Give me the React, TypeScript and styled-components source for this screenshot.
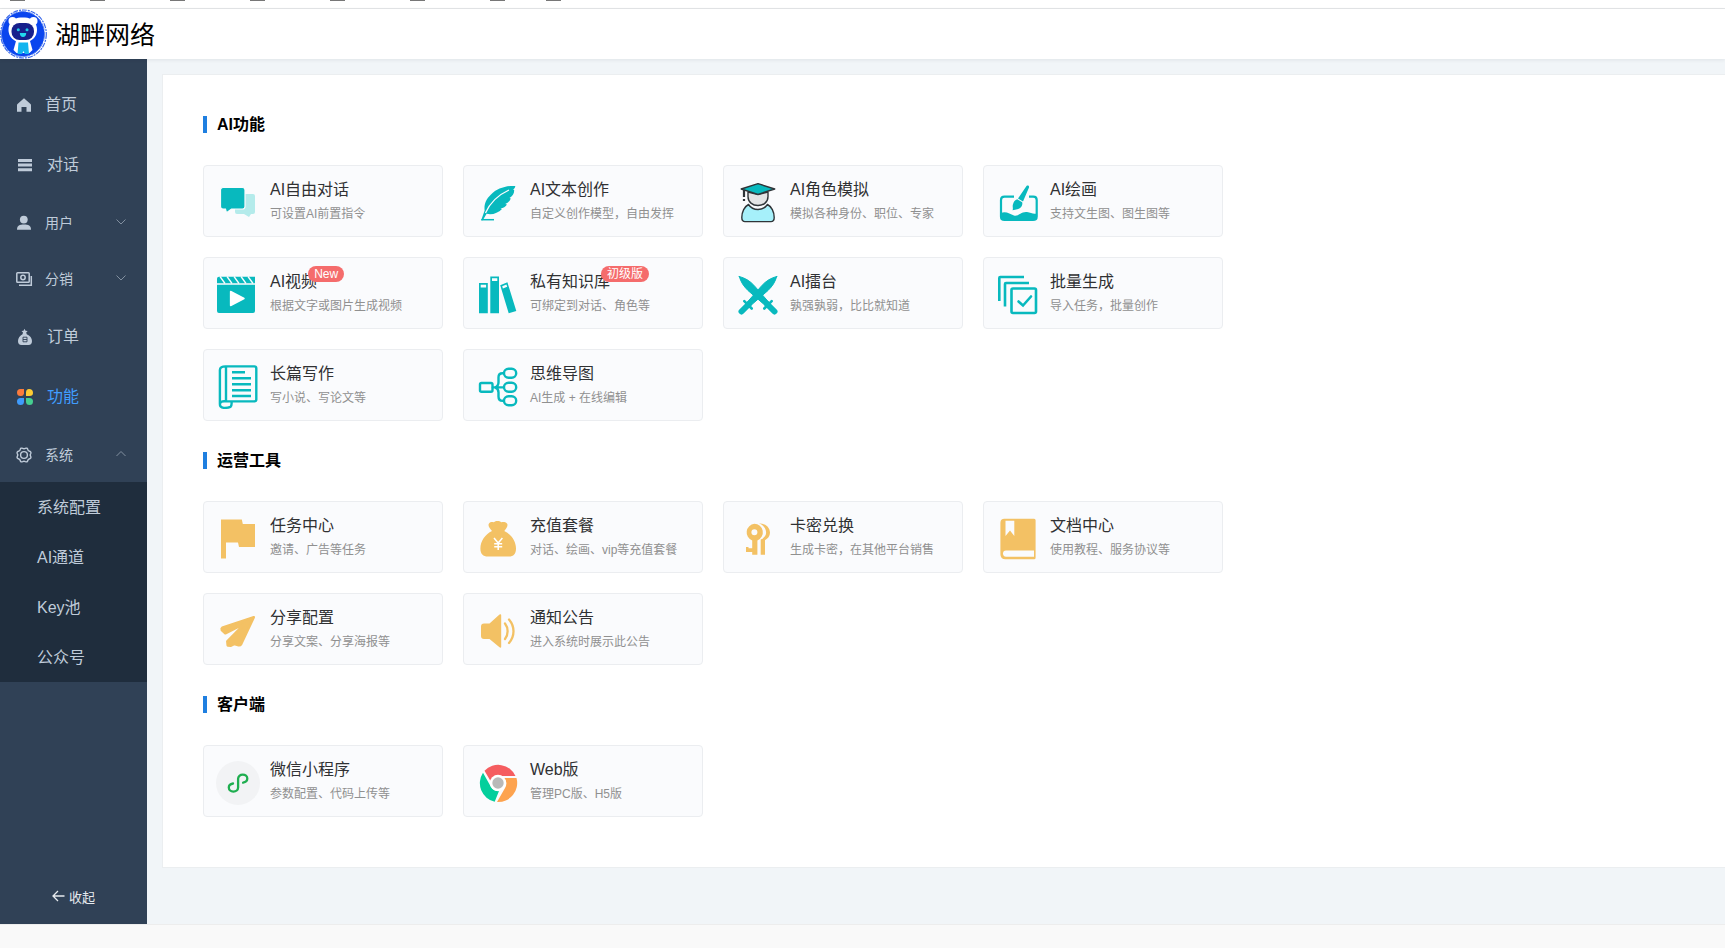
import React from "react";
import styled, { createGlobalStyle } from "styled-components";

const TEAL = "#08b9be";
const GOLD = "#f3c164";
const CARD_BG = "#fafbfd";

const GlobalStyle = createGlobalStyle`
  *, *::before, *::after { box-sizing: border-box; }
  html, body, #root { height: 100%; }
  body {
    margin: 0;
    background: #fff;
    color: #303133;
    font-family: "Liberation Sans", "Noto Sans CJK SC", sans-serif;
    font-size: 16px;
  }
  h1, h2, p, ul { margin: 0; padding: 0; }
  ul { list-style: none; }
  button { font-family: inherit; }
`;

const Page = styled.div`
  display: flex;
  flex-direction: column;
  min-height: 100%;
  overflow-x: hidden;
`;

const BookmarkStrip = styled.div`
  display: flex;
  flex: none;
  gap: 65px;
  height: 9px;
  padding-left: 10px;
  border-bottom: 1px solid #e4e6e8;
`;

const BookmarkEdge = styled.span<{ $tight?: boolean }>`
  width: 15px;
  height: 1px;
  margin-left: ${(p) => (p.$tight ? "-24px" : "0")};
  background: #777;
`;

const Header = styled.header`
  display: flex;
  flex: none;
  align-items: center;
  gap: 8px;
  height: 50px;
  background: #fff;
  box-shadow: 0 1px 4px rgba(0, 21, 41, 0.08);
  z-index: 1;
`;

const Brand = styled.h1`
  padding-top: 2px;
  font-size: 25px;
  line-height: 32px;
  font-weight: 400;
  color: #000;
`;

const Body = styled.div`
  display: flex;
  flex: 1;
`;

const Sidebar = styled.nav`
  display: flex;
  flex: none;
  flex-direction: column;
  width: 147px;
  padding-top: 15px;
  background: #304156;
`;

const MenuButton = styled.button<{ $group?: boolean; $active?: boolean }>`
  display: flex;
  align-items: center;
  gap: ${(p) => (p.$group ? "12px" : "13px")};
  width: 100%;
  height: ${(p) => (p.$group ? "56px" : "60px")};
  padding: ${(p) => (p.$group ? "0 20px 0 16px" : "0 20px 3px 16px")};
  border: 0;
  background: none;
  color: ${(p) => (p.$active ? "#409eff" : "#bfcbd9")};
  font-size: ${(p) => (p.$group ? "14px" : "16px")};
  text-align: left;
  cursor: pointer;

  svg {
    flex: none;
    margin-top: ${(p) => (p.$group ? "1px" : "4px")};
  }
`;

const Arrow = styled.svg`
  margin-left: auto;
  color: #8290a0;
`;

const SubMenu = styled.ul`
  background: #1f2d3d;
`;

const SubButton = styled.button`
  display: block;
  width: 100%;
  height: 50px;
  padding: 0 0 2px 37px;
  border: 0;
  background: none;
  color: #bfcbd9;
  font-size: 16px;
  text-align: left;
  cursor: pointer;
`;

const CollapseButton = styled.button`
  display: flex;
  align-items: center;
  justify-content: center;
  gap: 4px;
  height: 56px;
  margin-top: auto;
  padding: 0;
  border: 0;
  background: none;
  color: #e6eaee;
  font-size: 13px;
  cursor: pointer;
`;

const Content = styled.main`
  flex: 1;
  min-width: 0;
  padding: 15px 0 0 15px;
  background: #f1f5f8;
`;

const Panel = styled.div`
  display: flex;
  flex-direction: column;
  gap: 31px;
  padding: 41px 40px 50px;
  border: 1px solid #ebeef0;
  border-right: 0;
  background: #fff;
`;

const SectionTitle = styled.h2`
  margin-bottom: 32px;
  padding-left: 10px;
  border-left: 4px solid #1f7fe0;
  color: #000;
  font-size: 16px;
  line-height: 17px;
  font-weight: 700;
`;

const CardGrid = styled.div`
  display: grid;
  grid-template-columns: repeat(auto-fill, 240px);
  gap: 20px;
  max-width: 1020px;
`;

const Card = styled.a`
  display: flex;
  align-items: center;
  gap: 10px;
  height: 72px;
  padding: 0 12px;
  border: 1px solid #ebedf0;
  border-radius: 4px;
  background: ${CARD_BG};
  color: inherit;
  text-decoration: none;
`;

const CardIcon = styled.svg`
  flex: none;
  width: 44px;
  height: 44px;
  margin-top: 4px;
`;

const CardText = styled.div`
  display: flex;
  flex-direction: column;
  align-items: flex-start;
  padding-top: 2px;
`;

const CardTitle = styled.span`
  position: relative;
  color: #303133;
  font-size: 16px;
  line-height: 24px;
  white-space: nowrap;
`;

const CardNote = styled.span`
  color: #909090;
  font-size: 12px;
  line-height: 24px;
  white-space: nowrap;
`;

const Badge = styled.span`
  position: absolute;
  top: -4px;
  left: calc(100% - 9px);
  padding: 0 6px;
  border-radius: 8px;
  background: #f56c6c;
  color: #fff;
  font-size: 12px;
  line-height: 16px;
`;

const Footer = styled.footer`
  flex: none;
  height: 24px;
  border-top: 1px solid #ededed;
  background: #f9f9f9;
`;

/* ---------- card drawings, all on a 44 x 44 grid ---------- */

const icons: Record<string, React.ReactNode> = {
  chat: (
    <>
      <path fill="#b4ebeb" d="M21 13H37a2 2 0 0 1 2 2V31a2 2 0 0 1-2 2H35L33 36 28 33H21a2 2 0 0 1-2-2V15a2 2 0 0 1 2-2z" />
      <path fill={TEAL} stroke={CARD_BG} strokeWidth="1.2" d="M7 6.500H26.500a2.500 2.500 0 0 1 2.500 2.500V25.500a2.500 2.500 0 0 1-2.500 2.500H15.500L10.500 31.800 9.500 28H7a2.500 2.500 0 0 1-2.500-2.500V9A2.500 2.500 0 0 1 7 6.500z" />
    </>
  ),
  feather: (
    <>
      <path fill={TEAL} d="M39.300 5c-9-.6-18.300 2.400-24.300 8.400C9.500 18.500 8 24 8.600 29.500L5.200 39.300h1.600l3.800-6.500c5.500 1.500 11.400-.8 15.400-4.800l-1.500-.6c2.800-.2 5-1.700 6.500-4l-1.800-.3c2.500-1 4.600-3 5.600-5.600l-1.300-.5c3-1.800 4.800-4.800 4.700-7.800l-1-.6c1.200-1 2-2.300 2.100-3.600z" />
      <path fill="none" stroke={CARD_BG} strokeWidth="1.300" d="M9.500 32C13 24 21 14.500 33 9" />
      <path stroke={TEAL} strokeWidth="1.500" d="M5.300 38.700H18" />
    </>
  ),
  graduate: (
    <g stroke="#2f3438" strokeWidth="1.400" strokeLinejoin="round">
      <path fill="#a6f0fa" d="M12.500 23.500c2 3 5.500 5 9.500 5s7.500-2 9.500-5c4 2 6.700 7.500 6.700 13 0 2.700-1.200 4.100-3.200 4.100H9c-2 0-3.200-1.400-3.200-4.100 0-5.500 2.700-11 6.700-13z" />
      <path fill="#e3e4e5" d="M12 11v4.500c0 5.600 4.500 9 10 9s10-3.400 10-9V11L22 13.500z" />
      <path fill={TEAL} d="M5.200 8 22 2.600 38.700 8 22 13.300z" />
      <path fill="none" strokeWidth="2.200" d="M8 9v7M8 18v2" />
    </g>
  ),
  paint: (
    <>
      <path fill="none" stroke={TEAL} strokeWidth="2.200" d="M18 15.700H8.500Q5 15.700 5 19v16.500Q5 39 8.500 39h28.500q3.700 0 3.700-3.500V19q0-3.300-3.500-3.300H33" />
      <path fill={TEAL} d="M5 32c5-2 9 1.200 13 2.600 4 1.300 7-4.300 13-3.600 4 .5 6 2.600 9.700 1.500v3.500q0 3-3.700 3H9q-4 0-4-4z" />
      <path fill={TEAL} d="M30.500 5c1-1 3-.3 2.500 1.500L27 20.500 22 17.500zM21.200 18.200l5 3c.8 3.500-1.600 6.800-5 7-1.500 0-2.600 1-4.700 1 1-1.700-.4-3.500.5-6 .6-2.300 2-4.500 4.200-5z" />
    </>
  ),
  video: (
    <>
      <path fill={TEAL} d="M3 3.700h36v6.600H1V5.700q0-2 2-2zM1 11.800h38V38q0 2-2 2H3q-2 0-2-2z" />
      <path fill="#fff" stroke="#fff" strokeWidth="1.500" strokeLinejoin="round" d="M14.600 18.500v14L28 25.500z" />
      <path stroke={CARD_BG} strokeWidth="1.300" d="m4 3.500 5 7M11 3.500l5 7M18 3.500l5 7M25 3.500l5 7M32 3.500l5 7" />
    </>
  ),
  books: (
    <>
      <path fill={TEAL} d="M3 10h8.800v30.300H3zM14.300 3.400H23v36.900h-8.700zM24.200 12.300l7.200-3 8.900 28.700-7.600 2.300z" />
      <path fill={CARD_BG} d="M4.700 11.800h5.400v2.600H4.700zM16 5.200h5.300v2.700H16zM26.200 13.200l4.200-1.800.8 2.400-4.300 1.700z" />
    </>
  ),
  swords: (
    <g fill={TEAL} stroke={TEAL} strokeLinecap="round">
      <path strokeWidth="1" strokeLinejoin="round" d="M3.300 3.500c6 1.500 10.500 4.500 14.500 8.700L33.500 30l-3.300 3.300L12 17.500C7.500 13 4.800 9 3.300 3.500z" />
      <path strokeWidth="1" strokeLinejoin="round" d="M40.700 3.500c-6 1.500-10.500 4.500-14.500 8.700L10.500 30l3.300 3.300L32 17.500c4.500-4.500 7.200-8.500 8.700-14z" />
      <path strokeWidth="6" d="m31 31 7.500 7.500M13 31l-7.500 7.500" />
      <path strokeWidth="2.600" d="m28.300 35.500 7.400-7.400M15.700 35.500l-7.400-7.400" />
    </g>
  ),
  batch: (
    <g fill="none" stroke={TEAL} strokeWidth="2.600">
      <path d="M3.300 28V5q0-1 1-1H28M9 33.500V11q0-1 1-1H33" />
      <rect x="15.500" y="15.500" width="24.500" height="24.500" rx="1.500" />
      <path d="m22.500 28.500 4.500 4 8-9" strokeLinecap="round" />
    </g>
  ),
  scroll: (
    <g fill="none" stroke={TEAL} strokeWidth="2.400" strokeLinejoin="round">
      <path d="M10 1.400H38.300q2 0 2 2v31.200q0 1.800-2 1.800H10zM10 1.400Q3.900 1.200 3.900 5v34M10 36.400c-4-.8-6.100.8-6.100 3.100 0 4.300 6.600 3.800 10.600 2.300q1.500-1.300 1-5.400" />
      <path d="M16 7.200h13M16 13.200h19M16 19.200h19M16 25.200h19M16 31h19" />
    </g>
  ),
  mindmap: (
    <g fill="none" stroke={TEAL} strokeWidth="2.400">
      <rect x="4" y="18" width="12.500" height="8.800" rx="1.500" />
      <rect x="28" y="3.800" width="12.200" height="9" rx="4.500" />
      <rect x="28" y="17.800" width="12.200" height="9" rx="4.500" />
      <rect x="28" y="31.200" width="12.200" height="9" rx="4.500" />
      <path d="M16.500 22.400H28M28 8.300h-1.500q-4 0-4 4v5q0 4-3.500 5.100 3.500 1.200 3.500 5v4q0 4.300 4 4.300H28" />
    </g>
  ),
  flag: <path fill={GOLD} d="M5 2.400h20.800l1 4.600H39v23H23l-1-4.600H10v16H5z" />,
  bag: (
    <>
      <path fill={GOLD} d="M13 6.500c1.200-1.700 3.300-1.800 4.800-1.200 2-1.700 5.500-1.700 7.600 0 1.600-.6 4-.5 5.600 1.200 1.500 1.800-.7 5-2.700 7.500C35 17 40 24 40 31.500c0 5.500-2.500 8-7 8H12c-5 0-7.600-2.500-7.600-8C4.400 24 9.500 17 16 14c-2-2.500-4.600-5.600-3-7.500z" />
      <path fill="none" stroke="#fff" strokeWidth="1.500" d="M18 21l4.200 5 4.200-5M22.200 26v7M18.200 26.700h8M18.200 29.700h8" />
    </>
  ),
  keys: (
    <>
      <path fill={GOLD} d="M23 6.500c6-.5 11 3.600 11 9.300 0 3.200-2.200 6-5 7.400v14.500h-4.300V22.500c3.600-1.500 5.400-4 5.400-7 0-4-3-7.800-7.100-9z" />
      <path fill={GOLD} fillRule="evenodd" d="M18.400 6.800a8.600 8.600 0 0 1 3 16.600v14.300h-5.200V35H10v-5h2.500v1.300h3.700v-7.900a8.600 8.600 0 0 1 2.200-16.600zm0 5.500a3 3 0 1 0 0 6 3 3 0 0 0 0-6z" />
    </>
  ),
  manual: (
    <>
      <path fill={GOLD} d="M8.400 1.700h29.700q1.500 0 1.500 1.500v37.600q0 1.500-1.500 1.500H9.400q-5 0-5-5V5.700q0-4 4-4z" />
      <path fill={CARD_BG} d="M9.500 3.700h8.800V19L14 13.500 9.500 19zM10 33.400h28v6.300H10q-3 0-3-3.100t3-3.200z" />
    </>
  ),
  plane: <path fill={GOLD} stroke={GOLD} strokeWidth="2.500" strokeLinejoin="round" d="M37.800 8.200 6.200 18.800q-1 .6-.4 2.200l3.500 3.300L29 14.500 11.300 32.500l.4 4 3.300.2 3.500-1.700 4.200 1.300q1.600.2 2.500-1.300z" />,
  speaker: (
    <>
      <path fill={GOLD} d="M8 14.500h5.500L23.500 5.500q1.700-1 1.700.8v31.400q0 1.600-1.700.6L13.500 30H8q-3 0-3-3v-9.500q0-3 3-3z" />
      <path fill="none" stroke={GOLD} strokeWidth="2.300" strokeLinecap="round" d="M29 14.500c3.500 4.500 3.500 11 0 15.500M33 10.500c6 7 6 16.500 0 23.500" />
    </>
  ),
  miniapp: (
    <>
      <circle cx="22" cy="22" r="22" fill="#f2f3f5" />
      <path fill="none" stroke="#1fae50" strokeWidth="2.300" strokeLinecap="round" d="M17 22.500c-2.500.4-4.200 2-4.200 4.100 0 2.300 2 4 4.600 4s4.700-1.800 4.700-4.200v-8.600c0-2.400 2-4.200 4.600-4.200s4.600 1.700 4.600 4c0 2.100-1.700 3.700-4.200 4.100" />
    </>
  ),
  chrome: (
    <>
      <path fill="#f55d60" d="M8.500 9.700A19 19 0 0 1 39.500 15H22a8 8 0 0 0-7.500 5z" />
      <path fill="#fda34f" d="M40.500 17A19 19 0 0 1 21 41L29.300 26.500A8.500 8.500 0 0 0 28 17z" />
      <path fill="#04cf9c" d="M7 11.700 15 26a8.300 8.300 0 0 0 8 4L18.700 40.700A19 19 0 0 1 7 11.700z" />
      <circle cx="22" cy="22" r="8.200" fill="#fff" />
      <circle cx="22" cy="22" r="5.700" fill="#b9b9b9" />
    </>
  ),
};

type Item = { icon: string; title: string; note: string; badge?: string };

const sections: { title: string; items: Item[] }[] = [
  {
    title: "AI功能",
    items: [
      { icon: "chat", title: "AI自由对话", note: "可设置AI前置指令" },
      { icon: "feather", title: "AI文本创作", note: "自定义创作模型，自由发挥" },
      { icon: "graduate", title: "AI角色模拟", note: "模拟各种身份、职位、专家" },
      { icon: "paint", title: "AI绘画", note: "支持文生图、图生图等" },
      { icon: "video", title: "AI视频", note: "根据文字或图片生成视频", badge: "New" },
      { icon: "books", title: "私有知识库", note: "可绑定到对话、角色等", badge: "初级版" },
      { icon: "swords", title: "AI擂台", note: "孰强孰弱，比比就知道" },
      { icon: "batch", title: "批量生成", note: "导入任务，批量创作" },
      { icon: "scroll", title: "长篇写作", note: "写小说、写论文等" },
      { icon: "mindmap", title: "思维导图", note: "AI生成 + 在线编辑" },
    ],
  },
  {
    title: "运营工具",
    items: [
      { icon: "flag", title: "任务中心", note: "邀请、广告等任务" },
      { icon: "bag", title: "充值套餐", note: "对话、绘画、vip等充值套餐" },
      { icon: "keys", title: "卡密兑换", note: "生成卡密，在其他平台销售" },
      { icon: "manual", title: "文档中心", note: "使用教程、服务协议等" },
      { icon: "plane", title: "分享配置", note: "分享文案、分享海报等" },
      { icon: "speaker", title: "通知公告", note: "进入系统时展示此公告" },
    ],
  },
  {
    title: "客户端",
    items: [
      { icon: "miniapp", title: "微信小程序", note: "参数配置、代码上传等" },
      { icon: "chrome", title: "Web版", note: "管理PC版、H5版" },
    ],
  },
];

/* ---------- sidebar drawings, on an 18 x 18 grid ---------- */

/* Outline of a cog with eight soft teeth around (8, 9). */
const cogOutline =
  Array.from({ length: 64 }, (_, i) => {
    const angle = (i / 64) * Math.PI * 2;
    const radius = 6.8 + 0.6 * Math.cos(angle * 8 + Math.PI);
    const x = (8 + radius * Math.cos(angle)).toFixed(2);
    const y = (9 + radius * Math.sin(angle)).toFixed(2);
    return `${i ? "L" : "M"}${x} ${y}`;
  }).join("") + "z";

const menuIcons: Record<string, React.ReactNode> = {
  home: <path fill="currentColor" d="M8 2.200 14.500 8q.5.500.5 1.200v6.600h-4.500V11h-5v4.800H1V9.200Q1 8.500 1.500 8z" />,
  list: <path fill="currentColor" d="M2 3h14v3H2zM2 7.600h14v3H2zM2 12.200h14v3H2z" />,
  user: (
    <g fill="currentColor">
      <circle cx="7.800" cy="5.600" r="3.900" />
      <path d="M1 15.700C1 11.500 3.600 10.600 8 10.600s7 .9 7 5.100z" />
    </g>
  ),
  money: (
    <g fill="none" stroke="currentColor" strokeWidth="1.500">
      <rect x=".8" y="2.700" width="12.400" height="9.600" rx=".8" />
      <circle cx="7" cy="7.500" r="2.200" />
      <path d="M3 15.300h12.300V6" />
    </g>
  ),
  purse: (
    <>
      <path fill="currentColor" d="m8.500 .8 1 2 2.200.2-1.500 1.500.5 1.700C14 7.500 16 10 16 13c0 2.500-1.200 4-3.500 4h-7C3.200 17 2 15.500 2 13c0-3 2-5.500 4.500-6.800L7 4.500 5.500 3l2-.2z" />
      <path fill="none" stroke="#304156" strokeWidth=".9" d="M7 9.200h4v4.600H7zM7 11.500h4" />
    </>
  ),
  apps: (
    <>
      <path fill="#fb7b3c" d="M4.500 1H8v4.500A3 3 0 0 1 5 8H4.500a3.500 3.500 0 0 1 0-7z" />
      <path fill="#fdcb33" d="M13 1q4 0 4 4 0 3-3.500 3H10V4.500Q10 1 13 1z" />
      <path fill="#3f9bfc" d="M4.500 10H8v3.500Q8 17 4.500 17T1 13.500 4.500 10z" />
      <path fill="#45cf90" d="M10 10h3.500q3.500 0 3.500 3.500T13.500 17 10 13.500z" />
    </>
  ),
  gear: (
    <g fill="none" stroke="currentColor" strokeWidth="1.400" strokeLinejoin="round">
      <path d={cogOutline} />
      <circle cx="8" cy="9" r="3.400" />
    </g>
  ),
};

type MenuEntry = { icon: string; label: string; group?: "open" | "closed"; active?: boolean };

const menu: MenuEntry[] = [
  { icon: "home", label: "首页" },
  { icon: "list", label: "对话" },
  { icon: "user", label: "用户", group: "closed" },
  { icon: "money", label: "分销", group: "closed" },
  { icon: "purse", label: "订单" },
  { icon: "apps", label: "功能", active: true },
  { icon: "gear", label: "系统", group: "open" },
];

const systemMenu = ["系统配置", "AI通道", "Key池", "公众号"];

function Logo() {
  return (
    <svg width="47" height="50" viewBox="0 0 47 50" aria-hidden="true">
      <ellipse cx="23.500" cy="25" rx="22.800" ry="24" fill="none" stroke="#3d6bea" strokeWidth="1.200" strokeDasharray="5 1 2 1" />
      <ellipse cx="23" cy="25" rx="21.500" ry="22.500" fill="#0a45ee" stroke="#5d86f3" strokeWidth="1" strokeDasharray="7 2" />
      <circle cx="12.500" cy="12" r="4" fill="#fff" />
      <circle cx="33.500" cy="12" r="4" fill="#fff" />
      <path fill="#fff" d="M16 32h14l2.500 9-3 3h-13l-3-3z" />
      <rect x="8.500" y="8.500" width="28.500" height="24.500" rx="12" fill="#fff" />
      <rect x="11.500" y="14" width="22.500" height="17" rx="8" fill="#17208c" />
      <path fill="#13b5ef" d="M18.500 33.500h9.500l1 11.500h-4l-1.500-3-1.500 3h-4.500z" />
      <circle cx="18.300" cy="20.700" r="1.500" fill="#20c8e8" />
      <circle cx="27" cy="20.700" r="1.500" fill="#20c8e8" />
      <path fill="#22d8ee" d="M19.800 24h6.400q-.2 4-3.200 4t-3.200-4z" />
    </svg>
  );
}

function MenuRow({ icon, label, group, active }: MenuEntry) {
  const width = group ? 17 : icon === "home" ? 16 : 18;
  return (
    <MenuButton type="button" $group={!!group} $active={active} aria-expanded={group ? group === "open" : undefined}>
      <svg width={width} height="18" viewBox={`0 0 ${width} 18`} aria-hidden="true">
        {menuIcons[icon]}
      </svg>
      {label}
      {group && (
        <Arrow width="12" height="12" viewBox="0 0 12 12" fill="none" stroke="currentColor" aria-hidden="true">
          <path d={group === "open" ? "M1.500 7 6 2.500 10.500 7" : "M1.500 2.500 6 7l4.500-4.500"} />
        </Arrow>
      )}
    </MenuButton>
  );
}

export default function App() {
  return (
    <Page>
      <GlobalStyle />
      <BookmarkStrip aria-hidden="true">
        {[0, 1, 2, 3, 4, 5, 6, 7].map((n) => (
          <BookmarkEdge key={n} $tight={n === 7} />
        ))}
      </BookmarkStrip>
      <Header>
        <Logo />
        <Brand>湖畔网络</Brand>
      </Header>
      <Body>
        <Sidebar>
          <ul>
            {menu.map((entry) => (
              <li key={entry.label}>
                <MenuRow {...entry} />
              </li>
            ))}
          </ul>
          <SubMenu>
            {systemMenu.map((label) => (
              <li key={label}>
                <SubButton type="button">{label}</SubButton>
              </li>
            ))}
          </SubMenu>
          <CollapseButton type="button">
            <svg width="13" height="12" viewBox="0 0 13 12" fill="none" stroke="currentColor" strokeWidth="1.300" aria-hidden="true">
              <path d="M12.500 6H1.500M6 1 1 6l5 5" />
            </svg>
            收起
          </CollapseButton>
        </Sidebar>
        <Content>
          <Panel>
            {sections.map((section) => (
              <section key={section.title}>
                <SectionTitle>{section.title}</SectionTitle>
                <CardGrid>
                  {section.items.map((item) => (
                    <Card key={item.title} href="#">
                      <CardIcon viewBox="0 0 44 44" aria-hidden="true">
                        {icons[item.icon]}
                      </CardIcon>
                      <CardText>
                        <CardTitle>
                          {item.title}
                          {item.badge && <Badge>{item.badge}</Badge>}
                        </CardTitle>
                        <CardNote>{item.note}</CardNote>
                      </CardText>
                    </Card>
                  ))}
                </CardGrid>
              </section>
            ))}
          </Panel>
        </Content>
      </Body>
      <Footer />
    </Page>
  );
}
